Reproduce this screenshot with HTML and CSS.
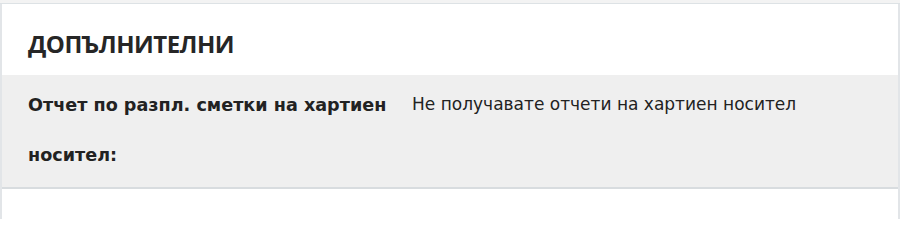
FILE: index.html
```html
<!DOCTYPE html>
<html lang="bg">
<head>
<meta charset="utf-8">
<title>Допълнителни</title>
<link rel="stylesheet" href="styles.css">
</head>
<body>
<div class="top-strip"></div>
<section class="panel">
  <h2 class="panel-title">ДОПЪЛНИТЕЛНИ</h2>
  <div class="row">
    <div class="label">Отчет по разпл. сметки на хартиен носител:</div>
    <div class="value">Не получавате отчети на хартиен носител</div>
  </div>
  <div class="panel-rest"></div>
</section>
</body>
</html>
```
FILE: styles.css
```css
html, body {
  margin: 0;
  padding: 0;
  background: #ffffff;
}
body {
  font-family: "DejaVu Sans", Verdana, sans-serif;
  color: #222222;
}
.top-strip {
  height: 3px;
  background: #f3f3f3;
  border-bottom: 1px solid #dde2e5;
}
.panel {
  border-left: 2px solid #e2e5e8;
  border-right: 2px solid #e2e5e8;
  background: #ffffff;
}
.panel-title {
  margin: 0;
  height: 71px;
  box-sizing: border-box;
  padding: 26px 0 0 26px;
  font-family: "Open Sans", "DejaVu Sans", sans-serif;
  font-size: 24px;
  line-height: 28px;
  font-weight: bold;
  color: #262626;
  letter-spacing: -0.5px;
}
.row {
  display: grid;
  grid-template-columns: 370px 1fr;
  column-gap: 14px;
  background: #efefef;
  padding: 5px 26px 7px 26px;
  border-bottom: 2px solid #d8dcdf;
}
.label {
  font-size: 17.6px;
  font-weight: bold;
  line-height: 50px;
  color: #222222;
}
.value {
  font-size: 17px;
  line-height: 48px;
  color: #222222;
}
.panel-rest {
  height: 30px;
}
```
